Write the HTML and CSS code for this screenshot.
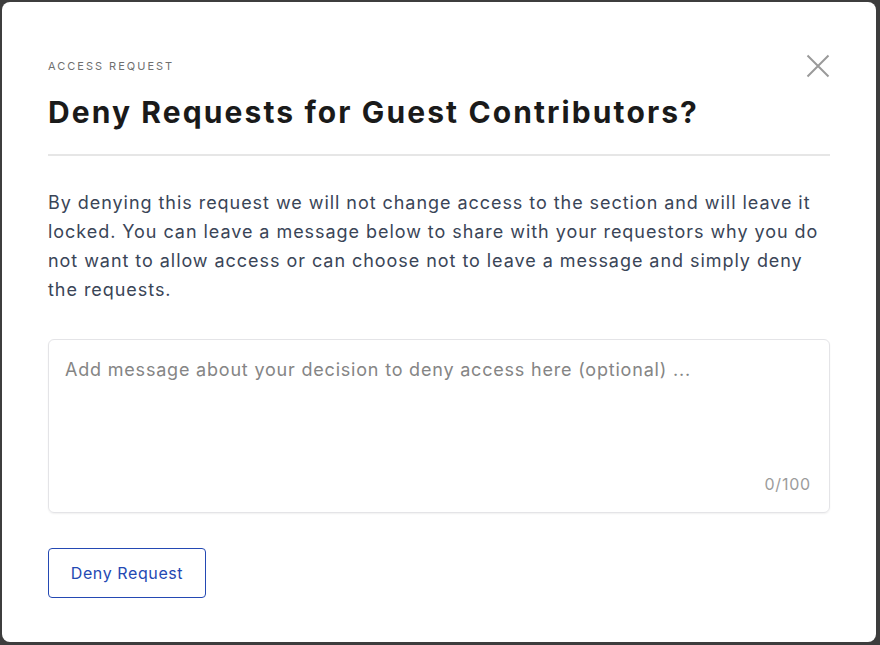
FILE: index.html
```html
<!DOCTYPE html>
<html lang="en">
<head>
<meta charset="utf-8">
<link rel="stylesheet" href="styles.css">
</head>
<body>
<div class="modal">
  <div class="header">
    <div class="titles">
      <div class="eyebrow">ACCESS REQUEST</div>
      <h1 class="title">Deny Requests for Guest Contributors?</h1>
    </div>
    <button class="close" aria-label="Close">
      <svg width="24" height="24" viewBox="0 0 24 24"><path d="M1.5 1.5L22.5 22.5M22.5 1.5L1.5 22.5" stroke="#9a9a9a" stroke-width="2" fill="none"/></svg>
    </button>
  </div>
  <div class="divider"></div>
  <p class="desc">By denying this request we will not change access to the section and will leave it locked. You can leave a message below to share with your requestors why you do not want to allow access or can choose not to leave a message and simply deny the requests.</p>
  <div class="field">
    <div class="placeholder">Add message about your decision to deny access here (optional) ...</div>
    <div class="counter">0/100</div>
  </div>
  <div class="actions">
    <button class="btn">Deny Request</button>
  </div>
</div>
</body>
</html>
```

FILE: styles.css
```css
html, body {
  margin: 0;
  padding: 0;
  height: 100%;
}
body {
  background: #3d3d3d;
  padding: 2px 4px 3px 2px;
  box-sizing: border-box;
  font-family: Inter, "Noto Sans", sans-serif;
}
.modal {
  background: #fff;
  border-radius: 8px;
  height: 100%;
  box-sizing: border-box;
  padding: 0 46px 0 46px;
  display: flex;
  flex-direction: column;
}
.header {
  display: flex;
  justify-content: space-between;
  align-items: flex-start;
  padding-top: 57px;
}
.eyebrow {
  font-size: 11px;
  letter-spacing: 2px;
  color: #6f6f6f;
  line-height: 14px;
}
.title {
  margin: 19px 0 0;
  font-size: 30px;
  font-weight: 700;
  color: #1a1a1a;
  line-height: 40px;
  letter-spacing: 2.1px;
}
.close {
  border: 0;
  background: none;
  padding: 0;
  margin: -5px 0 0 0;
  width: 24px;
  height: 24px;
  cursor: pointer;
}
.close svg { display: block; }
.divider {
  height: 2px;
  background: #e6e6e6;
  margin-top: 22px;
}
.desc {
  margin: 32px 0 0;
  font-size: 18px;
  line-height: 29px;
  color: #3a4557;
  letter-spacing: 0.95px;
}
.field {
  margin-top: 35px;
  height: 174px;
  border: 1px solid #e4e4e7;
  border-radius: 6px;
  box-shadow: 0 1px 2px rgba(0,0,0,0.06);
  box-sizing: border-box;
  padding: 17px 18px 17px 16px;
  display: flex;
  flex-direction: column;
  justify-content: space-between;
}
.placeholder {
  font-size: 18px;
  line-height: 26px;
  color: #858585;
  letter-spacing: 0.8px;
}
.counter {
  align-self: flex-end;
  font-size: 16px;
  color: #9c9c9c;
  line-height: 22px;
  letter-spacing: 0.8px;
}
.actions {
  margin-top: 35px;
}
.btn {
  font-family: inherit;
  font-size: 16px;
  color: #2449b3;
  background: #fff;
  border: 1.5px solid #2449b3;
  border-radius: 4px;
  width: 158px;
  height: 50px;
  padding: 0;
  letter-spacing: 0.6px;
}
```
